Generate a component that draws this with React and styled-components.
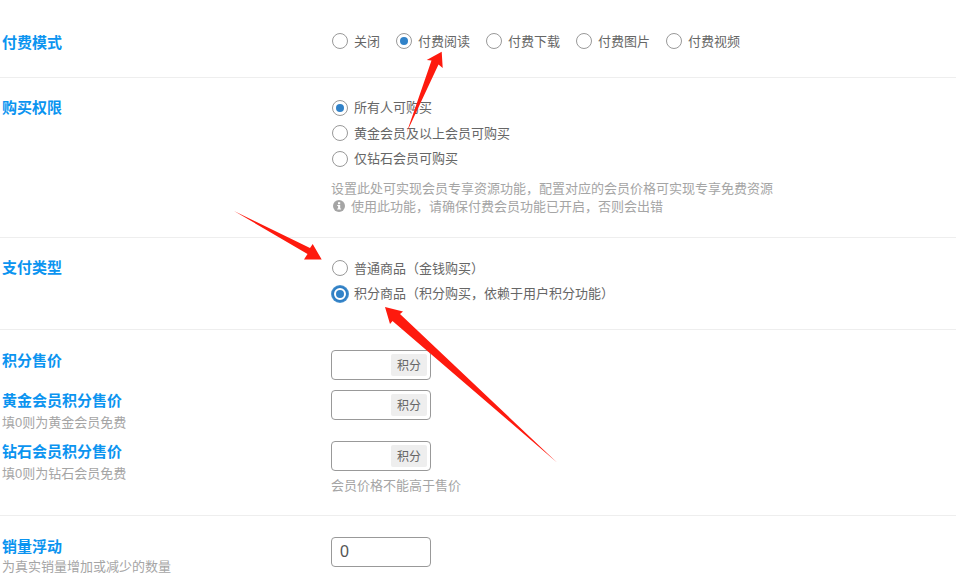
import React from 'react'
import styled, { createGlobalStyle } from 'styled-components'

const GlobalStyle = createGlobalStyle`
  html, body {
    margin: 0;
    padding: 0;
    background: #fff;
    overflow: hidden;
  }
  body {
    font-family: "Liberation Sans", "Noto Sans CJK SC", sans-serif;
  }
`

const Page = styled.div`
  position: relative;
  width: 956px;
  height: 587px;
  overflow: hidden;
`

const Row = styled.div`
  display: grid;
  grid-template-columns: 331px 1fr;
  height: ${(p) => p.$height}px;
  padding-top: ${(p) => p.$top}px;
  box-sizing: border-box;
  border-bottom: ${(p) => (p.$last ? 'none' : '1px solid #eee')};
`

const Col = styled.div`
  display: flex;
  flex-direction: column;
`

const Label = styled.div`
  padding-left: 2px;
  height: ${(p) => p.$height || 20}px;
  margin-top: ${(p) => p.$top || 0}px;
  font-size: 15px;
  line-height: 20px;
  font-weight: 700;
  color: #0b94f0;
`

const SubLabel = styled.div`
  padding-left: 2px;
  height: ${(p) => p.$height || 20}px;
  margin-top: ${(p) => p.$top || 0}px;
  font-size: 13px;
  line-height: 20px;
  color: #a5a5a5;
`

const ChoiceList = styled.div`
  display: flex;
  flex-direction: ${(p) => (p.$inline ? 'row' : 'column')};
  gap: ${(p) => (p.$inline ? '16px' : '0')};
  margin-left: 1px;
`

const Option = styled.div`
  display: flex;
  align-items: center;
  gap: 6px;
  height: ${(p) => p.$height || 25.5}px;
  font-size: 13px;
  color: #666;
`

const OptionText = styled.span`
  margin-top: -2px;
`

const Radio = styled.span`
  box-sizing: border-box;
  display: flex;
  align-items: center;
  justify-content: center;
  width: 16px;
  height: 16px;
  border-radius: 50%;
  border: ${(p) => (p.$focus ? '2px solid #2f7fc4' : '1px solid #999')};
  box-shadow: ${(p) => (p.$focus ? '0 0 0 1px #4d94d0' : 'none')};
  background: #fff;

  &::after {
    content: '';
    display: ${(p) => (p.$on ? 'block' : 'none')};
    width: 8px;
    height: 8px;
    border-radius: 50%;
    background: #3182c8;
  }
`

const Hint = styled.div`
  display: flex;
  align-items: center;
  gap: 6px;
  height: 18px;
  font-size: 13px;
  color: #a5a5a5;
`

const HintIcon = styled.svg`
  margin-left: 2px;
  flex: none;
`

const HintStack = styled.div`
  margin-top: ${(p) => p.$top || 0}px;
`

const Field = styled.div`
  box-sizing: border-box;
  display: flex;
  align-items: center;
  justify-content: space-between;
  width: 100px;
  height: 30px;
  padding: 0 3px 0 8px;
  margin-bottom: ${(p) => p.$gap || 0}px;
  border: 1px solid #999;
  border-radius: 4px;
  font-size: 16px;
  color: #555;
`

const Unit = styled.span`
  width: 36px;
  height: 22px;
  border-radius: 2px;
  background: #eee;
  font-size: 12px;
  line-height: 24px;
  text-align: center;
  color: #666;
`

const Arrows = styled.svg`
  position: absolute;
  left: 0;
  top: 0;
  pointer-events: none;
`

const payModes = [
  { text: '关闭' },
  { text: '付费阅读', on: true },
  { text: '付费下载' },
  { text: '付费图片' },
  { text: '付费视频' },
]

const Choice = ({ text, on, focus, height }) => (
  <Option $height={height}>
    <Radio $on={on} $focus={focus} />
    <OptionText>{text}</OptionText>
  </Option>
)

const InfoIcon = () => (
  <HintIcon width="12" height="12" viewBox="0 0 12 12">
    <circle cx="6" cy="6" r="6" fill="#a5a5a5" />
    <rect x="5" y="2.2" width="2.2" height="2" fill="#fff" />
    <path d="M4.2 5h3v3.6h.9v1H4.2v-1h.9V6h-.9z" fill="#fff" />
  </HintIcon>
)

const App = () => (
  <Page>
    <GlobalStyle />
    <Row $height={78} $top={33}>
      <Label>付费模式</Label>
      <ChoiceList $inline>
        {payModes.map((m) => (
          <Choice key={m.text} text={m.text} on={m.on} height={16} />
        ))}
      </ChoiceList>
    </Row>
    <Row $height={160} $top={17}>
      <Label $top={3}>购买权限</Label>
      <Col>
        <ChoiceList>
          <Choice text="所有人可购买" on />
          <Choice text="黄金会员及以上会员可购买" />
          <Choice text="仅钻石会员可购买" />
        </ChoiceList>
        <HintStack $top={7}>
          <Hint>设置此处可实现会员专享资源功能，配置对应的会员价格可实现专享免费资源</Hint>
          <Hint>
            <InfoIcon />
            使用此功能，请确保付费会员功能已开启，否则会出错
          </Hint>
        </HintStack>
      </Col>
    </Row>
    <Row $height={92} $top={17.5}>
      <Label $top={2.5}>支付类型</Label>
      <ChoiceList>
        <Choice text="普通商品（金钱购买）" />
        <Choice text="积分商品（积分购买，依赖于用户积分功能）" on focus />
      </ChoiceList>
    </Row>
    <Row $height={186} $top={20}>
      <Col>
        <Label $top={1} $height={40}>积分售价</Label>
        <Label>黄金会员积分售价</Label>
        <SubLabel $top={2} $height={29}>填0则为黄金会员免费</SubLabel>
        <Label>钻石会员积分售价</Label>
        <SubLabel $top={2}>填0则为钻石会员免费</SubLabel>
      </Col>
      <Col>
        <Field $gap={10}><span /><Unit>积分</Unit></Field>
        <Field $gap={21}><span /><Unit>积分</Unit></Field>
        <Field $gap={4}><span /><Unit>积分</Unit></Field>
        <Hint>会员价格不能高于售价</Hint>
      </Col>
    </Row>
    <Row $height={71} $top={21} $last>
      <Col>
        <Label>销量浮动</Label>
        <SubLabel>为真实销量增加或减少的数量</SubLabel>
      </Col>
      <Col>
        <Field>0</Field>
      </Col>
    </Row>
    <Arrows width="956" height="587" viewBox="0 0 956 587">
      <polygon points="406.7,132.5 431.5,60.5 426.7,60 441.7,51.7 442.7,68 438.5,64.5" fill="#fe1a0e" />
      <polygon points="234,211 310,248 312.7,244 321.7,259.5 304,259.5 307.5,254" fill="#fe1a0e" />
      <polygon points="557,462.5 400,314 403,311.5 385,307 390,324 392.5,321" fill="#fe1a0e" />
    </Arrows>
  </Page>
)

export default App
